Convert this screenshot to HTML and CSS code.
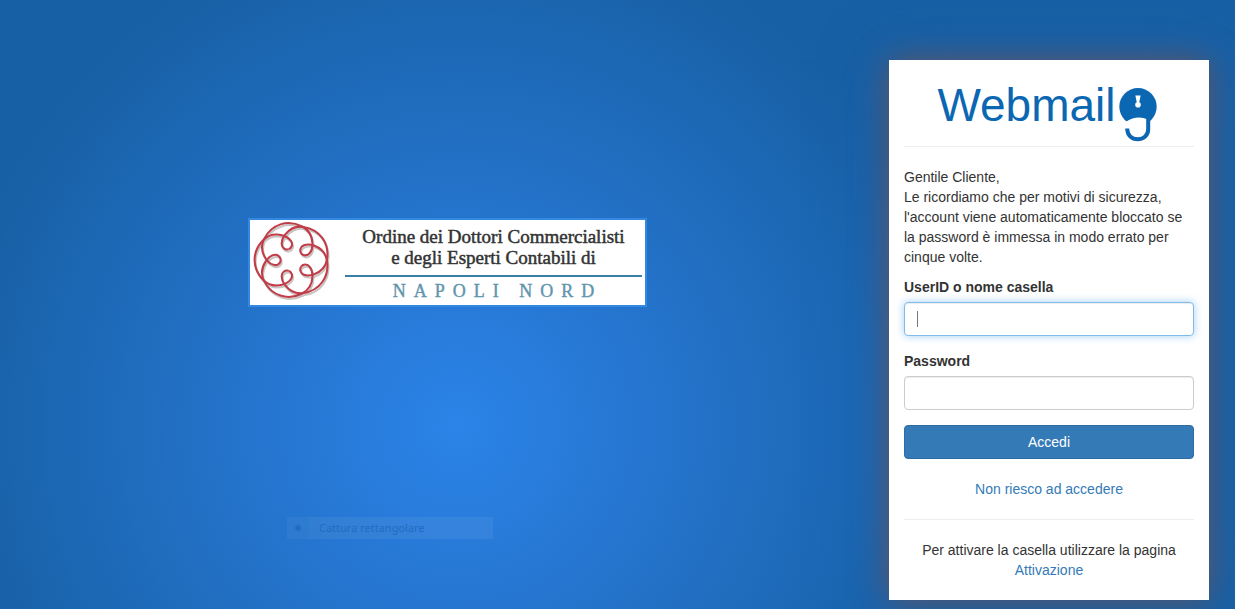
FILE: index.html
```html
<!DOCTYPE html>
<html lang="it">
<head>
  <meta charset="UTF-8">
  <title>Webmail</title>
  <meta name="viewport" content="width=device-width, initial-scale=1.0">
  <link rel="stylesheet" href="styles.css">
</head>
<body>

  <main class="page">
    <section class="hero">
      <div class="banner">
        <svg class="emblem" viewBox="-39 -38 76 78" role="img" aria-label="Ordine dei Dottori Commercialisti">
          <defs>
            <path id="petal" d="M-3.4 -10.5C-.2 -11.5 1 -15.5 -1 -18.5C-3 -21.5 -5.5 -22.9 -9 -23.9C-16 -25.9 -23 -24.5 -28 -19.5C-33.5 -14 -36.5 -7 -36.5 0C-36.5 7 -33.5 14 -28 19.5C-23 24.5 -16 25.9 -9 23.9C-5.5 22.9 -3 21.5 -1 18.5C1 15.5 -.2 11.5 -3.4 10.5"/>
            <g id="knot">
              <use href="#petal"/>
              <use href="#petal" transform="rotate(72)"/>
              <use href="#petal" transform="rotate(144)"/>
              <use href="#petal" transform="rotate(216)"/>
              <use href="#petal" transform="rotate(288)"/>
            </g>
          </defs>
          <use class="knot-shadow" href="#knot" x="1" y="2"/>
          <use class="knot-line" href="#knot"/>
        </svg>
        <div class="banner-text">
          <p class="banner-title">Ordine dei Dottori Commercialisti<br>e degli Esperti Contabili di</p>
          <p class="banner-city">NAPOLI NORD</p>
        </div>
      </div>
    </section>

    <section class="login">
      <h1 class="brand">
        <span>Webmail</span>
        <svg class="brand-icon" viewBox="0 0 38 54" aria-hidden="true">
          <circle cx="19" cy="18.7" r="18.7" fill="#0c67b2"/>
          <path d="M7.3 33.5Q18 26.5 29 31.5V42H0V38z" fill="#fff"/>
          <path d="M8.2 40.5C8.2 47 12.5 51.3 18.8 51.3C25 51.3 29.2 47 29.2 41V27" fill="none" stroke="#0c67b2" stroke-width="4"/>
          <path d="M16.4 7.5H21.6L20.2 14.5H17.8z" fill="#fff"/>
          <circle cx="19" cy="16.8" r="2.8" fill="#fff"/>
        </svg>
      </h1>

      <p class="notice">Gentile Cliente,<br>Le ricordiamo che per motivi di sicurezza, l'account viene automaticamente bloccato se la password è immessa in modo errato per cinque volte.</p>

      <form>
        <div class="form-group">
          <label for="userid">UserID o nome casella</label>
          <input type="text" id="userid" name="userid" placeholder=" " autofocus>
        </div>
        <div class="form-group">
          <label for="password">Password</label>
          <input type="password" id="password" name="password">
        </div>
        <button type="submit" class="btn-login">Accedi</button>
      </form>

      <p class="help"><a href="#">Non riesco ad accedere</a></p>
      <p class="activate">Per attivare la casella utilizzare la pagina <a href="#">Attivazione</a></p>
    </section>
  </main>

  <!-- fading menu entry over the page -->
  <div class="ghost-menu">
    <span class="ghost-mark"></span>
    <span class="ghost-label">Cattura rettangolare</span>
  </div>

</body>
</html>
```
FILE: styles.css
```css
* { margin: 0; padding: 0; box-sizing: border-box; }
body {
  min-height: 100vh;
  background: radial-gradient(circle 510px at 37% 70%, #2b84e8, #287ad8 25%, #1860a5) #1860a5;
  color: #333;
  font-family: "Liberation Sans", Arial, sans-serif;
  font-size: 14px;
  line-height: 20px;
}
a {
  color: #337ab7;
  text-decoration: none;
}
.page {
  display: flex;
  align-items: flex-start;
  padding: 60px 26px 9px 6px;
}
.hero {
  flex: 1;
  display: flex;
  justify-content: center;
  padding-top: 158px;
}
.banner {
  display: flex;
  width: 399px;
  background: white;
  border: 2px solid #3388e2;
}
.emblem {
  width: 78px;
  height: 80px;
  margin: 1px 15px 0 2px;
}
.knot-shadow {
  fill: none;
  stroke: #c9c4c2;
  stroke-width: 2;
}
.knot-line {
  fill: none;
  stroke: #c03c48;
  stroke-width: 2;
}
.banner-text {
  flex: 1;
  margin-right: 3px;
  text-align: center;
  font-family: "Liberation Serif", "Times New Roman", serif;
}
.banner-title {
  padding: 6px 0 7px;
  border-bottom: 2px solid #3c7fa6;
  color: #333;
  font-size: 19px;
  line-height: 21px;
  -webkit-text-stroke: 0.5px #333;
}
.banner-city {
  padding-left: 8px;
  color: #6294ad;
  font-size: 18px;
  line-height: 28px;
  letter-spacing: 8px;
  -webkit-text-stroke: 0.4px #6294ad;
}
.login {
  width: 320px;
  padding: 15px 15px 20px;
  background: white;
  box-shadow: 0 0 30px #62545f, 0 0 60px rgba(30, 98, 178, 0.5);
}
.brand {
  display: flex;
  justify-content: center;
  gap: 3px;
  height: 72px;
  margin-bottom: 20px;
  padding-right: 4px;
  border-bottom: 1px solid #eee;
  color: #0c67b2;
  font-size: 46px;
  font-weight: normal;
  line-height: 60px;
}
.brand-icon {
  width: 38px;
  height: 54px;
  margin-top: 13px;
}
.notice {
  margin-bottom: 10px;
}
.form-group {
  margin-bottom: 15px;
}
.form-group label {
  display: block;
  margin-bottom: 5px;
  font-weight: bold;
}
.form-group input {
  display: block;
  width: 100%;
  height: 34px;
  padding: 6px 12px;
  border: 1px solid #ccc;
  border-radius: 4px;
  box-shadow: inset 0 1px 1px rgba(0, 0, 0, 0.075);
  color: #555;
  font: inherit;
}
.form-group input:focus {
  border-color: #7fbbeb;
  outline: 0;
  box-shadow: inset 0 1px 1px rgba(0, 0, 0, 0.075), 0 0 8px rgba(102, 175, 233, 0.6);
}
/* steady caret while the box is empty */
#userid:focus:placeholder-shown {
  background: linear-gradient(#777, #777) 12px 8px / 1px 16px no-repeat white;
  caret-color: transparent;
}
.btn-login {
  display: block;
  width: 100%;
  height: 34px;
  background: #337ab7;
  color: white;
  border: 1px solid #2e6da4;
  border-radius: 4px;
  font: inherit;
  cursor: pointer;
}
.help {
  padding: 20px 0;
  border-bottom: 1px solid #eee;
  text-align: center;
}
.activate {
  padding-top: 20px;
  text-align: center;
}
.ghost-menu {
  position: absolute;
  top: 517px;
  left: 287px;
  display: flex;
  width: 206px;
  height: 22px;
  background: rgba(255, 255, 255, 0.04);
  color: #226cc0;
  font-family: "Noto Sans", sans-serif;
  font-size: 11px;
  line-height: 22px;
}
.ghost-mark {
  width: 22px;
  background: radial-gradient(circle at center, #226cc0 2px, transparent 4px);
}
.ghost-label {
  flex: 1;
  padding-left: 10px;
  background: rgba(255, 255, 255, 0.02);
}
```
